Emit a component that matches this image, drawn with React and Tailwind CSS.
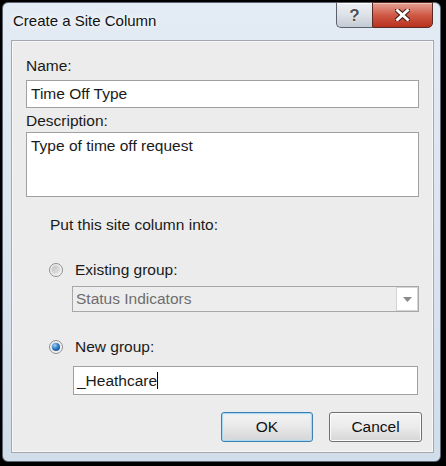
import React from 'react';

const font = { fontFamily: '"Liberation Sans", Arial, sans-serif' };

const Radio = ({ checked }) => (
  <div className="w-[14px] h-[14px] rounded-full border border-[#8e8f8f] bg-gradient-to-br from-[#d0d0d0] to-[#f7f7f7] flex items-center justify-center shadow-[inset_0_0_0_1px_#f4f4f4]">
    {checked ? (
      <div className="w-[8px] h-[8px] rounded-full bg-[radial-gradient(circle_at_35%_30%,#9fd0f5_0%,#2e7cc4_45%,#0f3f7a_100%)]" />
    ) : (
      <div className="w-[8px] h-[8px] rounded-full bg-gradient-to-br from-[#c4c4c4] to-[#e6e6e6]" />
    )}
  </div>
);

export default function App() {
  return (
    <div style={font} className="w-[446px] h-[466px] border-l-2 border-t-2 border-r-[5px] border-b-[4px] border-black bg-black text-[15.5px] leading-[20px] text-[#1a1a1a]">
      <div className="w-full h-full rounded-[6px] border border-[#5b6573] bg-gradient-to-b from-[#e3ebf4] via-[#dbe4ef] to-[#d2ddea] flex flex-col pl-[8px] pr-[6px] pb-[8px]">
        {/* title bar */}
        <div className="h-[37px] flex items-start justify-between">
          <div className="mt-[8px] ml-[2px] text-[15px] text-[#111] [text-shadow:0_0_6px_#fff,0_0_10px_#fff]">Create a Site Column</div>
          <div className="flex mr-[1px] -mt-[1px]">
            <div className="w-[36px] h-[26px] rounded-bl-[5px] border border-[#5a6270] border-r-0 bg-gradient-to-b from-[#eef1f5] via-[#dde2e8] to-[#c3cad3] flex items-center justify-center shadow-[inset_0_1px_0_#fff]">
              <span className="text-[17px] font-bold text-[#4a4f57] leading-none [text-shadow:0_0_2px_#fff,0_0_1px_#fff]">?</span>
            </div>
            <div className="w-[61px] h-[26px] rounded-br-[5px] border border-[#5a2a24] bg-gradient-to-b from-[#e2a095] via-[#cf5a46] to-[#b7301c] flex items-center justify-center shadow-[inset_0_1px_0_#f3c6bd]">
              <svg width="15" height="12" viewBox="0 0 15 12">
                <path d="M2.5 1.5 L12.5 10.5 M12.5 1.5 L2.5 10.5" stroke="#3b1a14" strokeWidth="5" strokeLinecap="square" />
                <path d="M2.5 1.5 L12.5 10.5 M12.5 1.5 L2.5 10.5" stroke="#ffffff" strokeWidth="3" strokeLinecap="square" />
              </svg>
            </div>
          </div>
        </div>

        {/* content panel */}
        <div className="flex-1 border border-[#a3a8ae] bg-[#ececec] shadow-[inset_0_0_0_1px_#f7f7f7] flex flex-col px-[14px] pt-[15px]">
          <div>Name:</div>
          <div className="mt-[4px] h-[28px] border border-[#a0a0a0] bg-white flex items-center px-[4px]">Time Off Type</div>
          <div className="mt-[3px]">Description:</div>
          <div className="mt-[1px] h-[65px] border border-[#a0a0a0] bg-white px-[4px] pt-[3px]">Type of time off request</div>

          <div className="mt-[18px] ml-[24px]">Put this site column into:</div>

          <div className="mt-[25px] ml-[23px] flex items-center gap-[12px]">
            <Radio />
            <span>Existing group:</span>
          </div>
          <div className="mt-[6px] ml-[46px] h-[26px] border border-[#a7a7a7] bg-[#ededed] flex items-center">
            <span className="flex-1 px-[3px] text-[#6d6d6d]">Status Indicators</span>
            <div className="w-[22px] h-[24px] bg-white border border-[#d4d4d4] flex items-center justify-center">
              <svg width="9" height="5" viewBox="0 0 9 5"><path d="M0 0 H9 L4.5 5 Z" fill="#8a8a8a" /></svg>
            </div>
          </div>

          <div className="mt-[25px] ml-[23px] flex items-center gap-[12px]">
            <Radio checked />
            <span>New group:</span>
          </div>
          <div className="mt-[9px] ml-[47px] mr-[1px] h-[29px] border border-[#a0a0a0] bg-white flex items-center px-[3px]">
            <span>_Heathcare</span>
            <span className="w-[1px] h-[17px] bg-black" />
          </div>

          <div className="mt-[17px] flex justify-end gap-[16px] mr-[-3px]">
            <button className="w-[92px] h-[30px] rounded-[3px] border border-[#3c7fb1] bg-gradient-to-b from-[#f4f4f4] via-[#e8e8e8] to-[#d4d4d4] shadow-[inset_0_0_0_1px_#a9d8f2,inset_0_0_2px_1px_#cfe9f7] text-[15.5px] text-[#111]">OK</button>
            <button className="w-[93px] h-[30px] rounded-[3px] border border-[#707070] bg-gradient-to-b from-[#f4f4f4] via-[#ebebeb] to-[#d6d6d6] shadow-[inset_0_0_0_1px_#fcfcfc] text-[15.5px] text-[#111]">Cancel</button>
          </div>
        </div>
      </div>
    </div>
  );
}
